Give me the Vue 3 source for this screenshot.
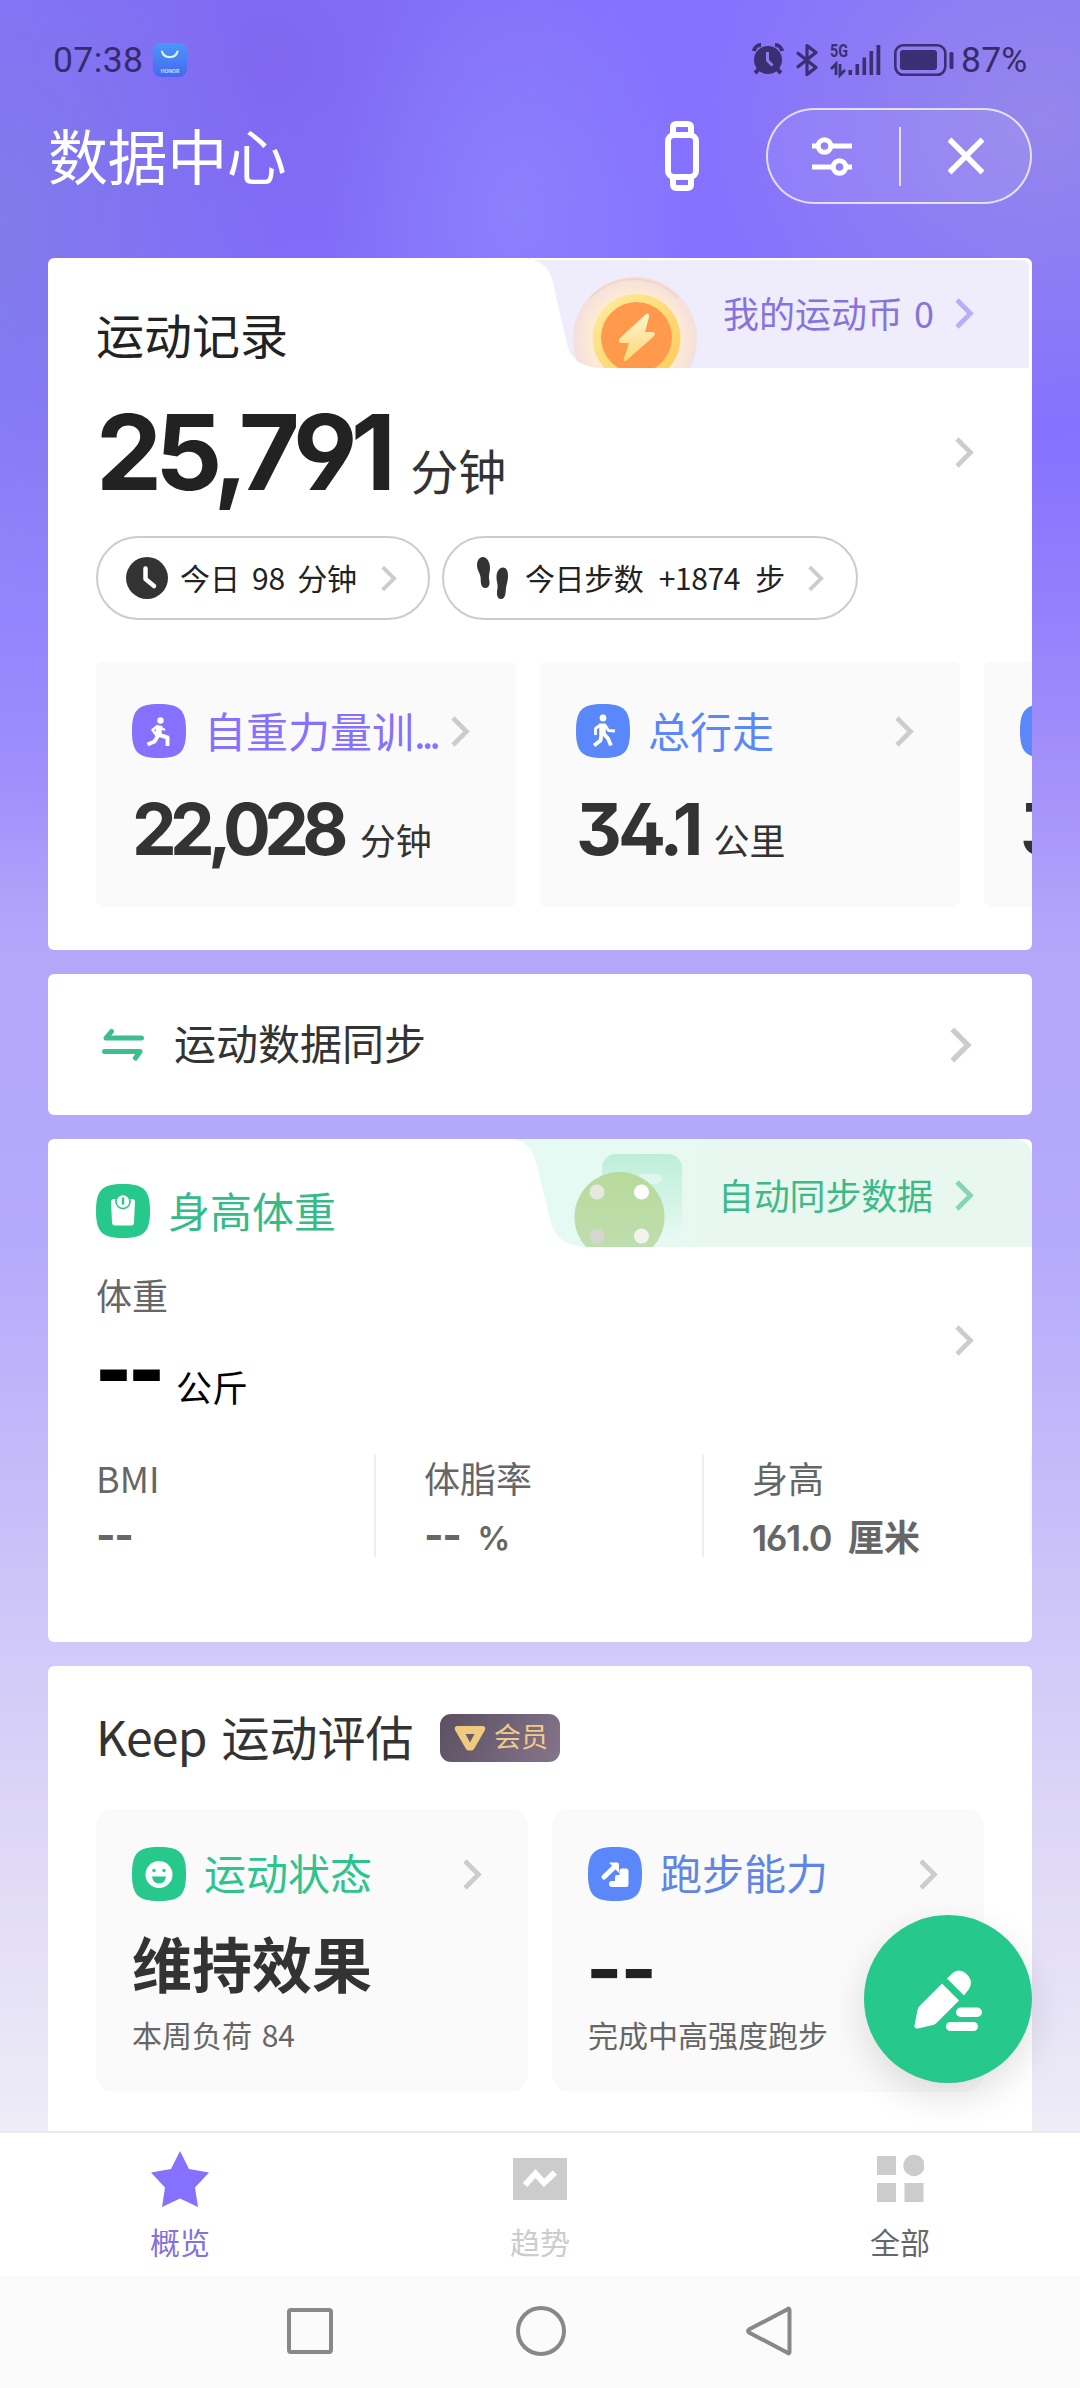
<script setup>
import { h } from 'vue'

const SQUIRCLE = 'M27 0C48 0 54 6 54 27S48 54 27 54 0 48 0 27 6 0 27 0Z'

const Chevron = (props) =>
  h('svg', { class: 'chev', width: props.w || 19, height: props.hgt || 31, viewBox: '0 0 19 31', style: { display: 'block', flex: 'none' } }, [
    h('path', { d: 'M2 2L15.5 15.5 2 29', fill: 'none', stroke: props.color || '#ccc', 'stroke-width': 4.6 })
  ])
Chevron.props = ['w', 'hgt', 'color']

const sports = [
  { name: '自重力量训', dots: true, icon: 'lunge', color: '#8570ff', value: '22,028', unit: '分钟', gap: 18, tight: true },
  { name: '总行走', icon: 'walk', color: '#5a87fa', value: '34.1', unit: '公里', gap: 14 },
  { name: '行走', icon: 'walk', color: '#5a87fa', value: '34.1', unit: '公里', gap: 14 }
]

const stats = [
  { label: 'BMI', value: '--', unit: '' },
  { label: '体脂率', value: '--', unit: '%' },
  { label: '身高', value: '161.0', unit: '厘米' }
]
</script>

<template>
  <div class="page">
    <header class="status">
      <div class="left">
        <span class="time">07:38</span>
        <svg width="34" height="34" viewBox="0 0 34 34">
          <defs><linearGradient id="ai" x1="0" y1="0" x2="0" y2="1"><stop offset="0" stop-color="#4a97fb" /><stop offset="1" stop-color="#4668ee" /></linearGradient></defs>
          <rect width="34" height="34" rx="8" fill="url(#ai)" />
          <path d="M9 8.500a8 7.500 0 0 0 15.500 0" fill="none" stroke="#dcf3ff" stroke-width="2.200" stroke-linecap="round" />
          <text x="17" y="29.500" text-anchor="middle" font-size="5" font-weight="700" fill="#c9dcff" font-family="Inter, sans-serif">HONOR</text>
        </svg>
      </div>
      <div class="right">
        <svg class="alarm" width="32" height="32" viewBox="0 0 32 32">
          <circle cx="16" cy="17" r="14" fill="#3a2f73" />
          <path d="M2 8a7 7 0 0 1 7-6M30 8a7 7 0 0 0-7-6M7 26l-4 4M25 26l4 4" fill="none" stroke="#3a2f73" stroke-width="4" />
          <path d="M15.500 9v8.500l5 5" fill="none" stroke="#8d7eec" stroke-width="3" />
        </svg>
        <svg class="bt" width="24" height="34" viewBox="0 0 24 34">
          <path d="M2 9.500l19 15-9 7V2.500l9 7-19 15" fill="none" stroke="#3a2f73" stroke-width="3.200" stroke-linejoin="round" />
        </svg>
        <svg class="sig" width="52" height="34" viewBox="0 0 52 34">
          <text x="0" y="14" font-size="18.500" font-weight="700" fill="#3a2f73" font-family="Roboto, sans-serif" textLength="18" lengthAdjust="spacingAndGlyphs">5G</text>
          <path d="M1 26l5-5v11M10 21v11l5-5" fill="none" stroke="#3a2f73" stroke-width="2.800" />
          <path d="M18.500 27h3.600v5h-3.600zM25.500 21h3.600v11h-3.600zM32.500 14.500h3.600V32h-3.600zM39.500 8h3.600v24h-3.600zM46.500 2h3.800v30h-3.800z" fill="#3a2f73" />
        </svg>
        <svg class="bat" width="60" height="34" viewBox="0 0 60 34">
          <rect x="1.300" y="2.300" width="50" height="29.500" rx="8" fill="none" stroke="#3a2f73" stroke-width="2.600" />
          <rect x="6" y="7" width="37" height="20" rx="3" fill="#3a2f73" />
          <rect x="55.500" y="9" width="4" height="17" rx="1.500" fill="#3a2f73" />
        </svg>
        <span class="pct">87%</span>
      </div>
    </header>

    <div class="titlebar">
      <h1>数据中心</h1>
      <svg class="watch" width="34" height="70" viewBox="0 0 34 70" fill="none" stroke="#fff" stroke-width="6">
        <rect x="3" y="14" width="28" height="42" rx="6" />
        <path d="M8 14V6.500Q8 3 11.500 3h11Q26 3 26 6.500V14M8 56v7.500Q8 67 11.500 67h11q3.500 0 3.500-3.500V56" />
      </svg>
      <div class="capsule">
        <svg width="40" height="40" viewBox="0 0 40 40" fill="none" stroke="#fff" stroke-width="5">
          <path d="M0 10h6M18 10h22M0 31h21M33 31h7" />
          <circle cx="12.500" cy="10" r="6.300" />
          <circle cx="27.500" cy="31" r="6.300" />
        </svg>
        <i></i>
        <svg width="36" height="38" viewBox="0 0 36 38"><path d="M1.500 2.500l33 33M34.500 2.500l-33 33" stroke="#fff" stroke-width="5.500" fill="none" /></svg>
      </div>
    </div>

    <main>
      <section class="card record">
        <h2>运动记录</h2>
        <div class="strip coin">
          <svg class="shape" width="504" height="110" viewBox="0 0 504 110">
            <defs>
              <radialGradient id="bub" cx=".5" cy=".5" r=".5"><stop offset="0" stop-color="#fff0c8" /><stop offset=".72" stop-color="#fdebd4" /><stop offset="1" stop-color="#f4dfde" /></radialGradient>
              <linearGradient id="ring" x1="0" y1="0" x2="1" y2="1"><stop offset="0" stop-color="#ffeca0" /><stop offset="1" stop-color="#ffca54" /></linearGradient>
              <linearGradient id="bolt" x1="0" y1="0" x2="0" y2="1"><stop offset="0" stop-color="#fff5cf" /><stop offset="1" stop-color="#ffd676" /></linearGradient>
              <clipPath id="c1"><path d="M0 1C14 3 22 10 25 25L39 86C43 101 52 108 72 110H501V10Q501 2 493 2H0Z" /></clipPath>
            </defs>
            <g clip-path="url(#c1)">
              <rect width="504" height="110" fill="#efecfc" />
              <circle cx="107" cy="81" r="62" fill="url(#bub)" />
              <path d="M62 40a61 61 0 0 1 88 0" fill="none" stroke="#f1d4c0" stroke-width="2" opacity=".8" />
              <circle cx="108.500" cy="80" r="44" fill="url(#ring)" />
              <circle cx="108.500" cy="79.500" r="35.500" fill="#ff9a4c" />
              <path d="M117 57Q121 53 121 59L117 74H125Q129 75 125 79L99 102Q95 105 96 100L101 85H93Q89 84 92 80Z" fill="url(#bolt)" />
            </g>
          </svg>
          <div class="strip-text"><span>我的运动币 0</span><Chevron color="#b9adf4" /></div>
        </div>
        <div class="total">
          <b class="num">25,791</b><span>分钟</span>
          <Chevron class="go" />
        </div>
        <div class="pills">
          <div class="pill p1">
            <svg width="42" height="42" viewBox="0 0 42 42"><circle cx="21" cy="21" r="21" fill="#333" /><path d="M19.500 11.500V22l8.500 7" fill="none" stroke="#fff" stroke-width="4.500" stroke-linecap="round" stroke-linejoin="round" /></svg>
            <span>今日 98 分钟</span><Chevron :w="16" :hgt="27" />
          </div>
          <div class="pill p2">
            <svg width="32" height="42" viewBox="0 0 32 42" fill="#333">
              <path d="M6 0C10 0 13 5 13 11 13 15 11.500 18 12 22 13 25 13 31 8.500 31 3 31 4 24 3.500 20 3 16 0 13 0 8 0 4 2 0 6 0Z" />
              <path d="M26 10.500C22 10.500 19.500 15 19.500 20 19.500 25 21 27 20.500 31 19.500 36 19.500 42 24 42 29 42 28.500 35 29 31 29.500 27 31 24 31 19 31 14 29.500 10.500 26 10.500Z" />
            </svg>
            <span>今日步数 +1874 步</span><Chevron :w="16" :hgt="27" />
          </div>
        </div>
        <div class="sports">
          <article v-for="(s, i) in sports" :key="i" class="sport">
            <div class="head">
              <svg width="54" height="54" viewBox="0 0 54 54">
                <path :d="SQUIRCLE" :fill="s.color" />
                <g v-if="s.icon === 'lunge'" fill="none" stroke="#fff" stroke-linejoin="round">
                  <circle cx="28.500" cy="16.500" r="3.200" fill="#fff" stroke="none" />
                  <path d="M27.500 21.500L26 32" stroke-width="6" />
                  <path d="M26 21.500l-5.500 4.500 4 5.500M29 24l4 2" stroke-width="2.500" />
                  <path d="M26.500 31l-4 6.500-7 3" stroke-width="4" />
                  <path d="M26 30.500l9.500 3V42" stroke-width="4" />
                </g>
                <g v-else fill="none" stroke="#fff" stroke-linejoin="round">
                  <circle cx="27" cy="14" r="3.400" fill="#fff" stroke="none" />
                  <path d="M26.500 19.500V31" stroke-width="6.500" />
                  <path d="M25 20.500l-5.500 4V31M29 21l3.500 5.500 6.500.5" stroke-width="2.800" />
                  <path d="M25.500 30l-1 6.500-6.500 5M28 30l4 4.500 3 7" stroke-width="3.800" />
                </g>
              </svg>
              <span class="name" :style="{ color: s.color }">{{ s.name }}<em v-if="s.dots">...</em></span>
              <Chevron />
            </div>
            <div class="val"><b class="num" :class="{ tight: s.tight }">{{ s.value }}</b><span :style="{ marginLeft: s.gap + 'px' }">{{ s.unit }}</span></div>
          </article>
        </div>
      </section>

      <section class="card sync">
        <svg width="42" height="34" viewBox="0 0 42 34" fill="none" stroke="#3dbf8d" stroke-width="5" stroke-linecap="round" stroke-linejoin="round">
          <path d="M39.500 10H4L9.500 3.500M2.500 23.500H38L33.500 30" />
        </svg>
        <span>运动数据同步</span>
        <Chevron :w="22" :hgt="36" />
      </section>

      <section class="card body">
        <div class="head">
          <svg width="54" height="54" viewBox="0 0 54 54">
            <path :d="SQUIRCLE" fill="#26c88c" />
            <path d="M15 17.500Q15 15 18 15H36Q39 15 39 17.500L38 38.500Q38 41.500 35 41.500H19Q16 41.500 16 38.500Z" fill="#fff" />
            <circle cx="27" cy="17.500" r="7" fill="#fff" stroke="#26c88c" stroke-width="1.600" />
            <path d="M27 13.500v7" stroke="#26c88c" stroke-width="2.400" />
          </svg>
          <span>身高体重</span>
        </div>
        <div class="strip auto">
          <svg class="shape" width="520" height="108" viewBox="0 0 520 108">
            <defs>
              <linearGradient id="sq" x1="0" y1="0" x2="0" y2="1"><stop offset="0" stop-color="#bdeeda" /><stop offset="1" stop-color="#e6f9f2" /></linearGradient>
              <linearGradient id="ball" x1="0" y1="0" x2="0" y2="1"><stop offset="0" stop-color="#b8da9b" /><stop offset="1" stop-color="#bfdfb2" /></linearGradient>
              <linearGradient id="ag" x1="0" y1="0" x2="1" y2="0"><stop offset="0" stop-color="#e5faf4" /><stop offset=".4" stop-color="#e8f8f1" /></linearGradient>
              <clipPath id="c2"><path d="M0 0C14 2 21 10 25 27L38 80C43 100 55 107 75 108H520V20Q520 0 500 0Z" /></clipPath>
            </defs>
            <g clip-path="url(#c2)">
              <rect width="520" height="108" fill="url(#ag)" />
              <rect x="90" y="15" width="80" height="84" rx="14" fill="url(#sq)" />
              <rect x="125" y="35" width="25" height="10" rx="5" fill="#def7ee" />
              <circle cx="107.500" cy="78" r="45" fill="url(#ball)" />
              <g fill="#fff"><circle cx="129.500" cy="53" r="7.600" /><circle cx="129.500" cy="97" r="7.600" fill="#f2f3ec" /><circle cx="85" cy="53" r="7.600" fill="#e6e8dd" /><circle cx="85" cy="97" r="7.600" fill="#d5d7ce" /></g>
            </g>
          </svg>
          <div class="strip-text"><span>自动同步数据</span><Chevron color="#86d4b3" /></div>
        </div>
        <p class="wl">体重</p>
        <div class="wv"><b class="num">--</b><span>公斤</span><Chevron class="go" /></div>
        <div class="stats">
          <div v-for="s in stats" :key="s.label" class="stat">
            <p>{{ s.label }}</p>
            <div class="sv"><b class="num" :class="{ none: s.value === '--' }">{{ s.value }}</b><b v-if="s.unit" :class="{ num: s.unit === '%' }">{{ s.unit }}</b></div>
          </div>
        </div>
      </section>

      <section class="card eval">
        <div class="et">
          <h2><span class="kp">Keep</span> 运动评估</h2>
          <div class="vip">
            <svg width="32" height="26" viewBox="0 0 32 26"><path d="M3 1H29Q32 1.500 31 5L20 24Q19 25.500 17 25.500H15Q13 25.500 12 24L1 5Q0 1.500 3 1ZM11.500 9L16 17.500 20.500 9Z" fill="#f0ca7e" fill-rule="evenodd" /></svg>
            <span>会员</span>
          </div>
        </div>
        <div class="evals">
          <article>
            <div class="head green">
              <svg width="54" height="54" viewBox="0 0 54 54">
                <path :d="SQUIRCLE" fill="#26c88c" />
                <circle cx="27" cy="27.500" r="13.500" fill="#fff" />
                <circle cx="22" cy="23.500" r="1.700" fill="#26c88c" /><circle cx="32" cy="23.500" r="1.700" fill="#26c88c" />
                <path d="M20 29.500H34Q33 36.500 27 36.500T20 29.500Z" fill="#26c88c" />
              </svg>
              <span>运动状态</span><Chevron />
            </div>
            <strong>维持效果</strong>
            <p>本周负荷 84</p>
          </article>
          <article>
            <div class="head blue">
              <svg width="54" height="54" viewBox="0 0 54 54">
                <path :d="SQUIRCLE" fill="#5a87fa" />
                <path d="M16 30L28 18.500" stroke="#fff" stroke-width="5" stroke-linecap="round" />
                <path d="M21 15.500H29Q31 15.500 31 17.500V26Z" fill="#fff" />
                <path d="M24 40Q21 40 21 37T24 34H27V30Q27 28 29 28H31.500V24Q31.500 21.500 34 21.500H38Q40.500 21.500 40.500 24V37.500Q40.500 40 38 40Z" fill="#fff" />
              </svg>
              <span>跑步能力</span><Chevron />
            </div>
            <strong class="num dash">--</strong>
            <p>完成中高强度跑步</p>
          </article>
        </div>
      </section>
    </main>

    <button class="fab">
      <svg width="68" height="60" viewBox="0 0 68 60" fill="#fff">
        <path d="M28 13.500L45 30.500L22.500 53Q21 54.500 19 55L4 58.500Q0 59 .5 55.500L3.500 40Q4 37.500 5.500 36Z" />
        <path d="M33 8.500L38 3.500Q45-2.500 52.500 4T55 19L50 25.500Z" />
        <rect x="42" y="37.500" width="26" height="9.500" rx="4.700" /><rect x="32" y="52" width="32" height="9" rx="4.500" />
      </svg>
    </button>

    <nav class="tabs">
      <div class="tab on">
        <svg width="58" height="56" viewBox="0 0 58 56"><path d="M29 0L38 18 58 21.500 44 36.500 47 56 29 47.500 11 56 14 36.500 0 21.500 20 18Z" fill="#8570ff" /></svg>
        <span>概览</span>
      </div>
      <div class="tab off">
        <svg width="54" height="56" viewBox="0 0 54 56"><path d="M0 7H54V49H0Z" fill="#ccc" /><path d="M12 34L22.500 22.500 31 32 42 21.500" fill="none" stroke="#fff" stroke-width="6" /></svg>
        <span>趋势</span>
      </div>
      <div class="tab">
        <svg width="47" height="56" viewBox="0 0 47 56" fill="#ccc"><path d="M0 5H19V24H0ZM0 32H19V51H0ZM27.500 32H46.500V51H27.500Z" /><circle cx="37" cy="14.500" r="10.700" /></svg>
        <span>全部</span>
      </div>
    </nav>
    <div class="sysnav">
      <svg width="50" height="52" viewBox="0 0 50 52"><rect x="4" y="5" width="42" height="42" rx="2" /></svg>
      <svg width="50" height="52" viewBox="0 0 50 52"><circle cx="25" cy="26" r="23" /></svg>
      <svg width="50" height="52" viewBox="0 0 50 52"><path d="M42 4.500Q44.500 2.500 44.500 5V47Q44.500 49.500 42 47.500L4 27.500Q2 26 4 24.500Z" /></svg>
    </div>
  </div>
</template>

<style>
body { margin: 0; }
</style>

<style scoped>
* { box-sizing: border-box; }
.page {
  position: relative; width: 1080px; height: 2388px; overflow: hidden;
  display: flex; flex-direction: column;
  font-family: "Noto Sans CJK SC", sans-serif; color: #222;
  background:
    radial-gradient(ellipse 360px 330px at 1040px 120px, rgba(152, 138, 232, .85), rgba(152, 138, 232, 0)),
    radial-gradient(ellipse 270px 420px at 0 230px, rgba(128, 124, 232, .9), rgba(128, 124, 232, 0)),
    radial-gradient(ellipse 190px 300px at 515px 210px, rgba(143, 136, 253, .7), rgba(143, 136, 253, 0)),
    radial-gradient(ellipse 380px 400px at 270px 60px, rgba(126, 102, 236, .75), rgba(126, 102, 236, 0)),
    radial-gradient(ellipse 260px 300px at 0 570px, rgba(148, 136, 255, .8), rgba(148, 136, 255, 0)),
    linear-gradient(180deg, #8570ff 0, #8570ff 420px, #9581fc 620px, #a896fa 820px, #b4a7fa 950px, #b5a9fb 1240px, #d1c9f8 1650px, #e2dcf6 1900px, #eeecf6 2130px);
}
h1, h2, p { margin: 0; font-weight: 400; }
svg { display: block; flex: none; }
.num { font-family: Inter, sans-serif; font-feature-settings: "cv02", "cv03", "cv04", "cv09"; line-height: 1; }

.status { height: 96px; display: flex; justify-content: space-between; padding: 43px 49px 0 53px; font-family: Roboto, sans-serif; font-size: 35.500px; line-height: 34px; color: #362b6c; flex: none; }
.status .left, .status .right { display: flex; align-items: flex-start; }
.time { width: 100px; letter-spacing: .4px; }
.alarm { margin-right: 11px; }
.bt { margin-right: 11px; }
.sig { margin-right: 12px; overflow: visible; }
.bat { margin-right: 7px; }
.pct { width: 70px; letter-spacing: .2px; }

.titlebar { height: 162px; flex: none; display: flex; align-items: flex-start; padding: 12px 48px 0 48px; color: #fff; }
h1 { font-size: 60px; line-height: 92px; width: 617px; letter-spacing: -.4px; }
.watch { margin: 13px 67px 0 0; }
.capsule { width: 266px; height: 96px; border: 2px solid rgba(255, 255, 255, .75); border-radius: 48px; display: flex; align-items: center; padding: 0 46px 0 44px; justify-content: space-between; background: rgba(255, 255, 255, .07); }
.capsule i { width: 2px; height: 59px; background: rgba(255, 255, 255, .75); }

main { height: 1873px; flex: none; overflow: hidden; padding: 0 48px; display: flex; flex-direction: column; gap: 24px; }
.card { position: relative; background: #fff; border-radius: 6px; overflow: hidden; flex: none; padding: 0 48px; }
h2 { font-size: 48px; line-height: 72px; }
.record { height: 692px; padding-top: 39px; }
.strip { position: absolute; top: 0; right: 0; height: 109px; }
.strip .shape { position: absolute; right: 0; top: 0; }
.strip-text { position: relative; display: flex; align-items: center; justify-content: space-between; font-size: 36px; line-height: 50px; }
.strip-text span { margin-top: -2px; }
.coin .strip-text { width: 251px; margin: 31px 58px 0 0; color: #8673dc; word-spacing: 3px; }
.auto .strip-text { width: 256px; margin: 32px 58px 0 0; color: #3dba88; letter-spacing: -.2px; }
.total { height: 105px; margin-top: 30px; display: flex; align-items: baseline; position: relative; }
.total .num { font-size: 105px; font-weight: 700; letter-spacing: -6.800px; }
.total span { font-size: 48px; line-height: 1; margin-left: 21px; color: #333; }
.go { margin-left: auto; margin-right: 10px; align-self: center; }
.total .go { margin-top: 2px; }
.pills { margin-top: 32px; display: flex; gap: 12px; }
.pill { height: 84px; border: 2px solid #ccc; border-radius: 42px; display: flex; align-items: center; font-size: 30px; line-height: 44px; white-space: nowrap; }
.p1 { width: 334px; padding: 0 31px 0 28px; }
.p2 { width: 416px; padding: 0 32px 0 33px; }
.pill span { margin-left: 12px; margin-right: auto; margin-top: -2px; word-spacing: 5.500px; letter-spacing: -.1px; }
.p2 span { margin-left: 16px; word-spacing: 9px; letter-spacing: -.4px; }
.sports { display: flex; gap: 24px; margin-top: 42px; }
.sport { width: 420px; height: 245px; flex: none; background: #fafafa; border-radius: 6px; padding: 42px 46px 0 36px; }
.head { display: flex; align-items: center; height: 54px; font-size: 42px; line-height: 54px; white-space: nowrap; }
.head span { margin-left: 18px; margin-right: auto; margin-top: -2px; }
.name em { font-style: normal; letter-spacing: -4px; }
.val { margin-top: 36px; display: flex; align-items: baseline; color: #333; white-space: nowrap; }
.val .num { font-size: 71px; font-weight: 700; letter-spacing: -4px; }
.val .tight { letter-spacing: -6.700px; }
.val span { font-size: 36px; line-height: 1; }

.sync { height: 141px; display: flex; align-items: center; font-size: 42px; color: #333; padding: 0 60px 0 54px; }
.sync span { margin-left: 30px; margin-right: auto; line-height: 60px; margin-top: -5px; }

.body { height: 503px; padding-top: 45px; }
.body .head { color: #35bb8a; }
.wl { font-size: 36px; line-height: 40px; margin-top: 36px; color: #666; }
.wv { height: 88px; margin-top: 20px; display: flex; align-items: flex-start; color: #000; }
.wv .num { font-size: 78px; font-weight: 900; letter-spacing: -4px; margin: -3px 0 0 -1px; }
.wv span { font-size: 36px; line-height: 36px; margin: 34px 0 0 15px; }
.wv .go { align-self: flex-start; margin-top: -9px; }
.stats { display: flex; margin: 33px -48px 0; height: 102px; }
.stat { width: 328px; padding-left: 48px; border-right: 2px solid #eee; color: #666; font-size: 36px; line-height: 44px; }
.stat:last-child { border-color: #f8f8f8; }
.sv { margin-top: 14px; display: flex; align-items: baseline; gap: 17px; height: 44px; }
.sv .num { font-weight: 600; letter-spacing: -1.500px; line-height: 44px; }
.sv .none { font-size: 42px; font-weight: 700; letter-spacing: -1.500px; }
.sv .none + .num { font-size: 33px; }
.sv b { font-weight: 700; }

.eval { height: 520px; padding-top: 33px; }
.et { display: flex; align-items: center; height: 72px; }
.et h2 { color: #333; width: 344px; white-space: nowrap; word-spacing: 4px; }
.kp { letter-spacing: -.7px; }
.vip { width: 120px; height: 48px; margin-top: 6px; border-radius: 11px; background: linear-gradient(120deg, #5b4f60, #85758c); display: flex; align-items: center; padding-left: 14px; color: #f0ca8a; font-size: 27px; line-height: 40px; }
.vip span { margin: -4px 0 0 8px; }
.evals { display: flex; gap: 24px; margin-top: 38px; }
.evals article { width: 432px; height: 283px; background: #fafafa; border-radius: 18px; padding: 38px 46px 0 36px; }
.green { color: #2fc38e; }
.blue { color: #5f86e4; }
.evals .head span { margin-left: 18px; margin-top: -4px; }
.evals strong { display: block; margin-top: 25px; font-size: 60px; line-height: 72px; height: 72px; color: #333; font-weight: 700; }
.evals .dash { font-size: 78px; color: #222; line-height: 86px; font-weight: 700; letter-spacing: -2px; margin-left: -2px; }
.evals p { font-size: 30px; line-height: 40px; margin-top: 16px; color: #666; white-space: nowrap; word-spacing: 3px; }

.fab { position: absolute; left: 864px; top: 1915px; width: 168px; height: 168px; border: 0; border-radius: 50%; background: #26c88c; display: flex; align-items: center; justify-content: center; padding: 0; box-shadow: 0 14px 36px rgba(0, 0, 0, .12); }
.fab svg { overflow: visible; margin-top: 1px; }

.tabs { position: relative; height: 145px; flex: none; background: #fff; border-top: 2px solid #ebebed; display: flex; }
.tab { flex: 1; display: flex; flex-direction: column; align-items: center; padding-top: 18px; font-size: 30px; line-height: 40px; color: #666; }
.tab span { margin-top: 14px; }
.tab.on { color: #8570e0; }
.tab.off { color: #ccc; }
.sysnav { flex: 1; background: #fbfbfb; display: flex; justify-content: center; gap: 181px; padding-top: 29px; }
.sysnav svg { fill: none; stroke: #888; stroke-width: 4; }
.sysnav svg:last-child { margin-left: -2px; }
</style>
